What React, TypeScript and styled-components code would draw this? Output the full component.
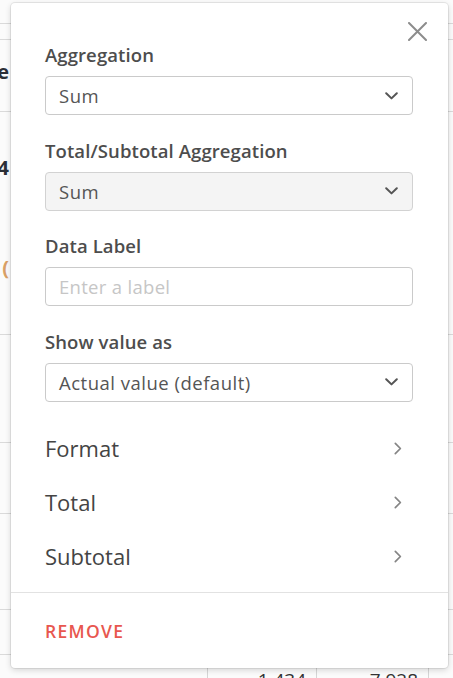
import React from 'react';
import styled, { createGlobalStyle } from 'styled-components';

const GlobalStyle = createGlobalStyle`
  html, body {
    margin: 0;
    padding: 0;
  }
  body {
    font-family: "Open Sans", "Liberation Sans", sans-serif;
    background: #fff;
  }
`;

const Page = styled.div`
  position: relative;
  width: 453px;
  height: 678px;
  overflow: hidden;
  background: #fbfbfb;
`;

/* the table that sits behind the popover */
const Sheet = styled.div`
  display: flex;
  flex-direction: column;
`;

const SheetRow = styled.div<{ $h: number }>`
  height: ${(p) => p.$h}px;
  box-sizing: border-box;
  border-bottom: 1px solid #dadada;
`;

const Stub = styled.div<{ $top: number; $color?: string }>`
  width: 9px;
  margin-top: ${(p) => p.$top}px;
  display: flex;
  justify-content: flex-end;
  white-space: nowrap;
  font-size: 20px;
  font-weight: 700;
  line-height: 24px;
  color: ${(p) => p.$color || '#2b2f36'};
`;

const NumberRow = styled.div`
  display: grid;
  grid-template-columns: 207px 109px 112px 1fr;
  height: 60px;
`;

const NumberCell = styled.div<{ $edge?: boolean }>`
  border-left: ${(p) => (p.$edge ? '1px solid #d6d6d6' : 'none')};
  padding: 12px 10px 0 0;
  text-align: right;
  font-size: 19px;
  color: #333;
`;

/* popover */
const Popover = styled.div`
  position: absolute;
  left: 11px;
  top: 3px;
  width: 437px;
  height: 665px;
  box-sizing: border-box;
  background: #fff;
  border-radius: 4px;
  box-shadow: 0 0 0 1px rgba(0, 0, 0, 0.07), 0 2px 6px rgba(0, 0, 0, 0.16);
  display: flex;
  flex-direction: column;
`;

const CloseButton = styled.button`
  position: absolute;
  top: 19px;
  right: 21px;
  width: 19px;
  height: 19px;
  padding: 0;
  border: none;
  background: none;
  display: flex;
  cursor: pointer;
`;

const Body = styled.div`
  padding: 41px 35px 0 34px;
  display: flex;
  flex-direction: column;
`;

const FieldGroup = styled.div`
  display: flex;
  flex-direction: column;
  margin-bottom: 24.5px;
`;

const Label = styled.label`
  font-size: 18.5px;
  font-weight: 600;
  letter-spacing: 0.1px;
  line-height: 22px;
  color: #4d4d4d;
  margin-bottom: 10px;
`;

const Select = styled.div<{ $disabled?: boolean }>`
  height: 39px;
  box-sizing: border-box;
  border: 1px solid ${(p) => (p.$disabled ? '#d2d2d2' : '#cacaca')};
  border-radius: 4px;
  background: ${(p) => (p.$disabled ? '#f4f4f4' : '#fff')};
  padding: 0 14px 0 13px;
  display: flex;
  align-items: center;
  justify-content: space-between;
  font-size: 18.5px;
  letter-spacing: 0.5px;
  color: #555;
`;

const TextInput = styled.input`
  height: 39px;
  box-sizing: border-box;
  border: 1px solid #cacaca;
  border-radius: 4px;
  padding: 0 13px;
  font-family: inherit;
  font-size: 18.5px;
  letter-spacing: 0.3px;
  color: #555;
  outline: none;
  &::placeholder {
    color: #c6c6c6;
  }
`;

const Menu = styled.div`
  display: flex;
  flex-direction: column;
  margin-top: -5px;
  margin-bottom: 9px;
`;

const MenuRow = styled.div`
  height: 54px;
  display: flex;
  align-items: center;
  justify-content: space-between;
  padding-right: 11px;
  font-size: 22px;
  color: #444;
  cursor: pointer;
`;

const Footer = styled.div`
  border-top: 1px solid #e2e2e2;
  flex: 1;
  display: flex;
  align-items: center;
  padding-left: 34px;
`;

const RemoveButton = styled.button`
  border: none;
  background: none;
  padding: 0;
  font-family: inherit;
  font-size: 17.5px;
  font-weight: 600;
  letter-spacing: 1.3px;
  color: #e8574f;
  cursor: pointer;
`;

const ChevronDown = () => (
  <svg width="13" height="8" viewBox="0 0 13 8" fill="none">
    <path d="M1.2 1.2 L6.5 6.4 L11.8 1.2" stroke="#555" strokeWidth="2" strokeLinecap="round" strokeLinejoin="round" />
  </svg>
);

const ChevronRight = () => (
  <svg width="8" height="13" viewBox="0 0 8 13" fill="none">
    <path d="M1.3 1.3 L6.4 6.5 L1.3 11.7" stroke="#858585" strokeWidth="1.7" strokeLinecap="round" strokeLinejoin="round" />
  </svg>
);

const CloseIcon = () => (
  <svg width="19" height="19" viewBox="0 0 19 19" fill="none">
    <path d="M1 1 L18 18 M18 1 L1 18" stroke="#8c8c8c" strokeWidth="2" strokeLinecap="round" />
  </svg>
);

const menuItems = ['Format', 'Total', 'Subtotal'];

const App: React.FC = () => {
  return (
    <Page>
      <GlobalStyle />
      <Sheet>
        <SheetRow $h={24} />
        <SheetRow $h={16} />
        <SheetRow $h={72}>
          <Stub $top={20}>Sale</Stub>
        </SheetRow>
        <SheetRow $h={223}>
          <Stub $top={44}>1,234</Stub>
          <Stub $top={76} $color="#d9a066">(</Stub>
        </SheetRow>
        <SheetRow $h={108} />
        <SheetRow $h={71} />
        <SheetRow $h={96} />
        <SheetRow $h={45} />
        <NumberRow>
          <NumberCell />
          <NumberCell $edge>1,434</NumberCell>
          <NumberCell $edge>7,928</NumberCell>
          <NumberCell $edge />
        </NumberRow>
      </Sheet>

      <Popover>
        <CloseButton aria-label="Close">
          <CloseIcon />
        </CloseButton>
        <Body>
          <FieldGroup>
            <Label>Aggregation</Label>
            <Select>
              <span>Sum</span>
              <ChevronDown />
            </Select>
          </FieldGroup>
          <FieldGroup>
            <Label>Total/Subtotal Aggregation</Label>
            <Select $disabled>
              <span>Sum</span>
              <ChevronDown />
            </Select>
          </FieldGroup>
          <FieldGroup>
            <Label>Data Label</Label>
            <TextInput placeholder="Enter a label" />
          </FieldGroup>
          <FieldGroup>
            <Label>Show value as</Label>
            <Select>
              <span>Actual value (default)</span>
              <ChevronDown />
            </Select>
          </FieldGroup>
          <Menu>
            {menuItems.map((item) => (
              <MenuRow key={item}>
                <span>{item}</span>
                <ChevronRight />
              </MenuRow>
            ))}
          </Menu>
        </Body>
        <Footer>
          <RemoveButton>REMOVE</RemoveButton>
        </Footer>
      </Popover>
    </Page>
  );
};

export default App;
